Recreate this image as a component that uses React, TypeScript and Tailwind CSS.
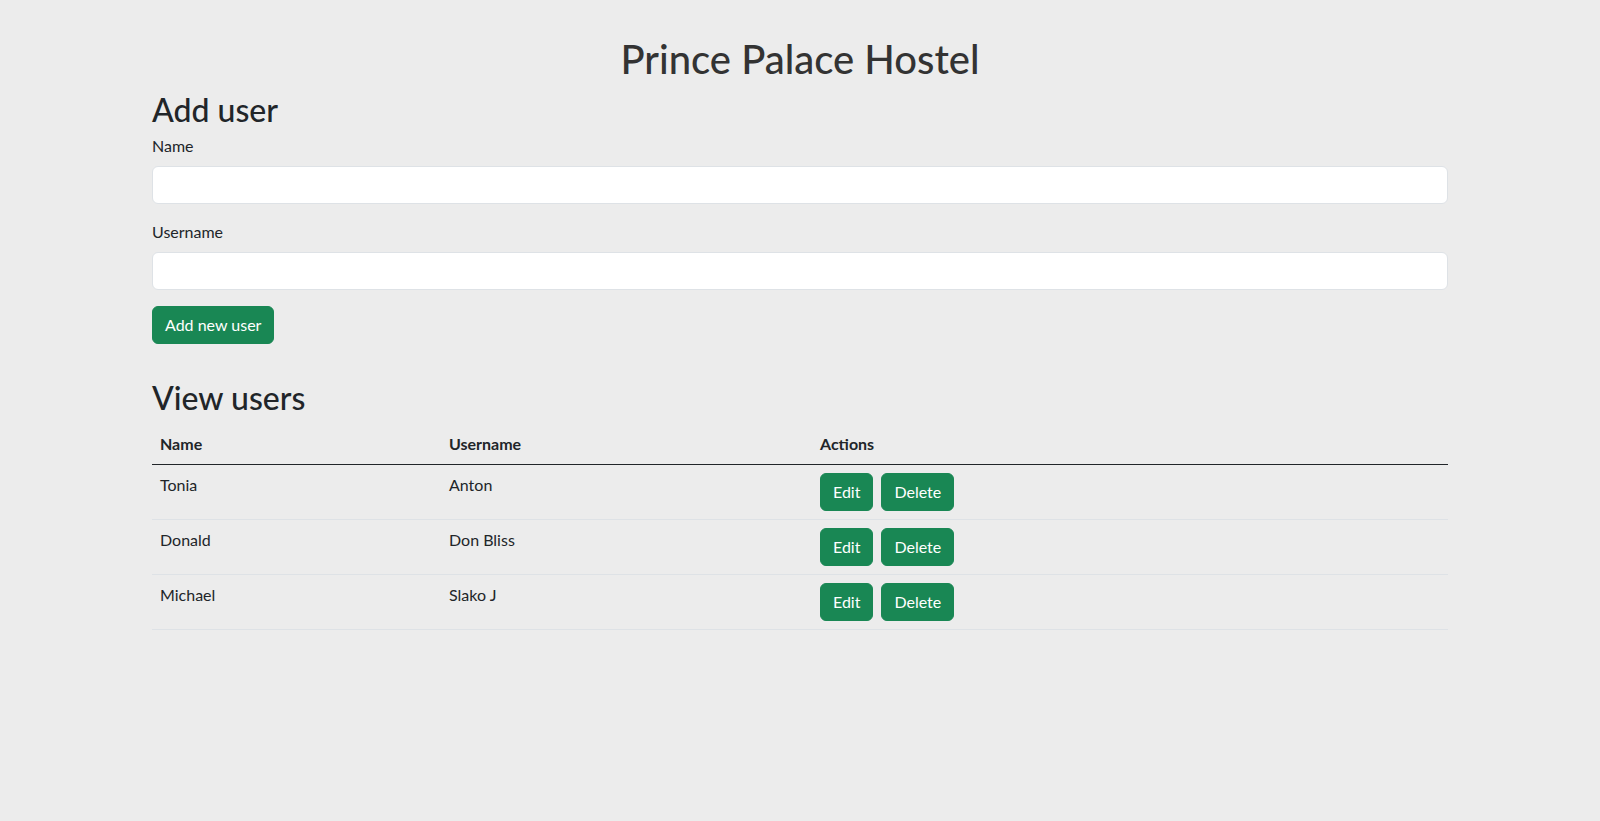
import React from "react";

const USERS = [
  { name: "Tonia", username: "Anton" },
  { name: "Donald", username: "Don Bliss" },
  { name: "Michael", username: "Slako J" },
];

function Field({ label }: { label: string }) {
  return (
    <div className="mb-4">
      <label className="block text-[16px] leading-6 mb-2">{label}</label>
      <input
        type="text"
        className="block w-full h-[38px] px-3 bg-white border border-[#dee2e6] rounded-[6px] outline-none"
      />
    </div>
  );
}

export default function App() {
  return (
    <div className="min-h-screen bg-[#ececec] text-[#212529]" style={{ fontFamily: "Lato, 'Noto Sans', sans-serif" }}>
      <div className="mx-auto w-[1296px] pt-[35px]">
        <h1 className="text-[40px] leading-[1.2] font-medium text-center text-[#333333] mb-2">Prince Palace Hostel</h1>

        {/* Add user */}
        <h2 className="text-[32px] leading-[1.2] font-medium mb-[5px]">Add user</h2>
        <form onSubmit={e => e.preventDefault()}>
          <Field label="Name" />
          <Field label="Username" />
          <button className="h-[38px] px-3 text-[16px] text-white bg-[#198754] border border-[#198754] rounded-[6px]">
            Add new user
          </button>
        </form>

        {/* View users */}
        <h2 className="text-[32px] leading-[1.2] font-medium mt-[35px] mb-[6px]">View users</h2>
        <table className="w-full text-[16px] leading-6 border-collapse">
          <thead>
            <tr className="border-b border-[#212529]">
              <th className="w-[289px] p-2 text-left font-bold">Name</th>
              <th className="w-[371px] p-2 text-left font-bold">Username</th>
              <th className="p-2 text-left font-bold">Actions</th>
            </tr>
          </thead>
          <tbody>
            {USERS.map(u => (
              <tr key={u.name} className="border-b border-[#dee2e6]">
                <td className="p-2 align-top">{u.name}</td>
                <td className="p-2 align-top">{u.username}</td>
                <td className="p-2 align-top">
                  <div className="flex gap-2">
                    <button className="h-[38px] px-3 text-white bg-[#198754] border border-[#198754] rounded-[6px]">Edit</button>
                    <button className="h-[38px] px-3 text-white bg-[#198754] border border-[#198754] rounded-[6px]">Delete</button>
                  </div>
                </td>
              </tr>
            ))}
          </tbody>
        </table>
      </div>
    </div>
  );
}
